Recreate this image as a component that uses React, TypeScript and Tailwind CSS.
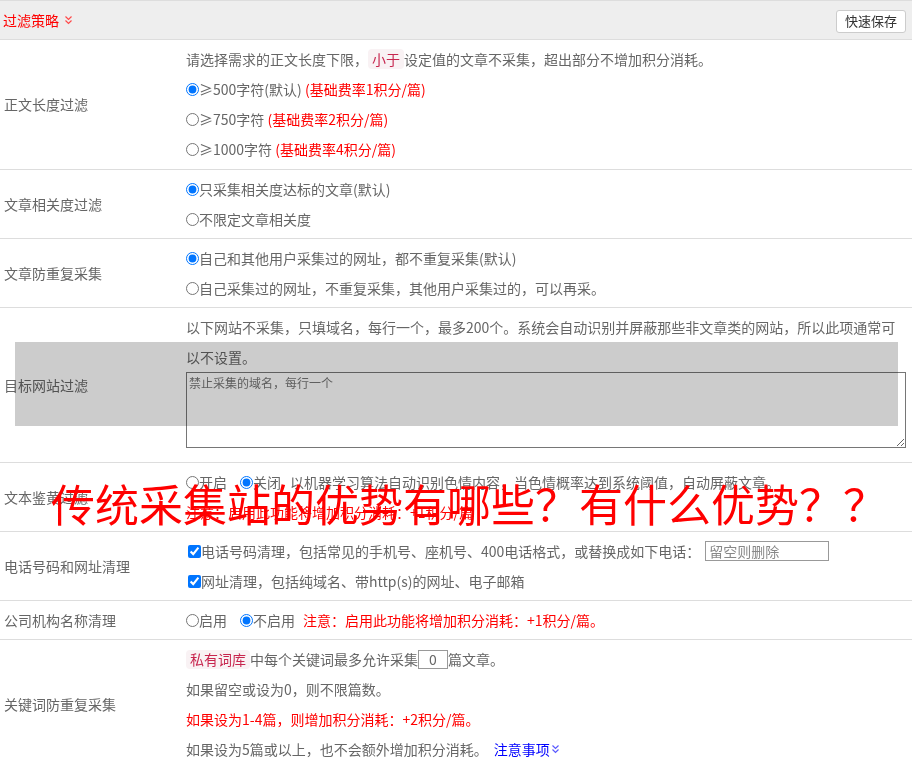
import React from "react";

function Chevrons({ color }: { color: string }) {
  return (
    <svg width="9" height="10" viewBox="0 0 9 10" className="inline-block" fill="none" stroke={color} strokeWidth="1.2">
      <path d="M1.5 1.5 L4.5 4.5 L7.5 1.5" />
      <path d="M1.5 5.5 L4.5 8.5 L7.5 5.5" />
    </svg>
  );
}

function Line({ children }: { children: React.ReactNode }) {
  return <div className="flex items-center h-[30px] whitespace-nowrap">{children}</div>;
}

function Radio({ name, checked, children, className = "" }: { name: string; checked?: boolean; children: React.ReactNode; className?: string }) {
  return (
    <label className={"flex items-center " + className}>
      <input type="radio" name={name} defaultChecked={checked} className="m-0 w-[13px] h-[13px]" />
      <span className="whitespace-pre">{children}</span>
    </label>
  );
}

function Row({ label, children, contentClass = "" }: { label: string; children: React.ReactNode; contentClass?: string }) {
  return (
    <div className="flex border-b border-[#ddd]">
      <div className="w-[186px] shrink-0 pl-[4px] flex items-center">{label}</div>
      <div className={"flex-1 pr-[6px] leading-[30px] " + contentClass}>{children}</div>
    </div>
  );
}

const Red = ({ children }: { children: React.ReactNode }) => <span className="text-[#ff0000]">{children}</span>;

export default function App() {
  return (
    <div className="relative w-[912px] min-h-[768px] bg-white text-[14px] text-[#666] font-['Noto_Sans_CJK_SC','Microsoft_YaHei',sans-serif] overflow-hidden">
      {/* header */}
      <div className="h-[40px] border-y border-[#ddd] bg-[#eeeeee] flex items-center justify-between pl-[3px] pr-[6px]">
        <div className="flex items-center gap-[5px] text-[#ff0000]">
          <span>过滤策略</span>
          <Chevrons color="#ff4a4a" />
        </div>
        <button className="h-[23px] mt-[2px] px-[8px] bg-white border border-[#ccc] rounded-[3px] text-[13px] text-[#333] leading-[20px]">快速保存</button>
      </div>

      <Row label="正文长度过滤" contentClass="pt-[4px] pb-[5px]">
        <Line>
          <span>请选择需求的正文长度下限，</span>
          <span className="inline-block px-[4px] leading-[20px] rounded-[4px] bg-[#f9f2f4] text-[#c7254e]">小于</span>
          <span>设定值的文章不采集，超出部分不增加积分消耗。</span>
        </Line>
        <Line><Radio name="len" checked>≥500字符(默认) <Red>(基础费率1积分/篇)</Red></Radio></Line>
        <Line><Radio name="len">≥750字符 <Red>(基础费率2积分/篇)</Red></Radio></Line>
        <Line><Radio name="len">≥1000字符 <Red>(基础费率4积分/篇)</Red></Radio></Line>
      </Row>

      <Row label="文章相关度过滤" contentClass="py-[4px]">
        <Line><Radio name="rel" checked>只采集相关度达标的文章(默认)</Radio></Line>
        <Line><Radio name="rel">不限定文章相关度</Radio></Line>
      </Row>

      <Row label="文章防重复采集" contentClass="py-[4px]">
        <Line><Radio name="dup" checked>自己和其他用户采集过的网址，都不重复采集(默认)</Radio></Line>
        <Line><Radio name="dup">自己采集过的网址，不重复采集，其他用户采集过的，可以再采。</Radio></Line>
      </Row>

      <Row label="目标网站过滤" contentClass="py-[4px]">
        <div className="leading-[30px] h-[60px]">以下网站不采集，只填域名，每行一个，最多200个。系统会自动识别并屏蔽那些非文章类的网站，所以此项通常可以不设置。</div>
        <textarea
          placeholder="禁止采集的域名，每行一个"
          className="block w-full h-[76px] mb-[10px] border border-[#767676] text-[12px] leading-[18px] px-[2px] py-[1px] placeholder:text-[#757575] bg-white"
        />
      </Row>

      <Row label="文本鉴黄过滤" contentClass="py-[4px]">
        <Line>
          <Radio name="porn" className="mr-[13px]">开启</Radio>
          <Radio name="porn" checked>关闭</Radio>
          <span className="ml-[9px]">以机器学习算法自动识别色情内容，当色情概率达到系统阈值，自动屏蔽文章。</span>
        </Line>
        <Line><Red>注意：启用此功能将增加积分消耗：+1积分/篇</Red></Line>
      </Row>

      <Row label="电话号码和网址清理" contentClass="py-[4px]">
        <Line>
          <input type="checkbox" defaultChecked className="m-0 ml-[2px] w-[13px] h-[13px]" />
          <span>电话号码清理，包括常见的手机号、座机号、400电话格式，或替换成如下电话：</span>
          <input
            type="text"
            placeholder="留空则删除"
            className="ml-[5px] w-[124px] h-[20px] border border-[#999] px-[3px] text-[14px] leading-[18px] placeholder:text-[#888]"
          />
        </Line>
        <Line>
          <input type="checkbox" defaultChecked className="m-0 ml-[2px] w-[13px] h-[13px]" />
          <span>网址清理，包括纯域名、带http(s)的网址、电子邮箱</span>
        </Line>
      </Row>

      <Row label="公司机构名称清理" contentClass="py-[4px]">
        <Line>
          <Radio name="org" className="mr-[13px]">启用</Radio>
          <Radio name="org" checked>不启用</Radio>
          <span className="ml-[8px] text-[#ff0000]">注意：启用此功能将增加积分消耗：+1积分/篇。</span>
        </Line>
      </Row>

      <Row label="关键词防重复采集" contentClass="py-[4px]">
        <Line>
          <span className="inline-block px-[4px] leading-[19px] rounded-[4px] bg-[#f9f2f4] text-[#c7254e]">私有词库</span>
          <span>中每个关键词最多允许采集</span>
          <input
            type="text"
            defaultValue="0"
            className="w-[30px] h-[19px] border border-[#999] text-center text-[14px] leading-[17px] text-[#666]"
          />
          <span>篇文章。</span>
        </Line>
        <Line>如果留空或设为0，则不限篇数。</Line>
        <Line><Red>如果设为1-4篇，则增加积分消耗：+2积分/篇。</Red></Line>
        <Line>
          <span>如果设为5篇或以上，也不会额外增加积分消耗。</span>
          <span className="ml-[6px] text-[#0000ff] flex items-center gap-[1px]">
            注意事项
            <Chevrons color="#5a5aff" />
          </span>
        </Line>
      </Row>

      {/* overlays */}
      <div className="absolute left-[15px] top-[342px] w-[883px] h-[84px] bg-[#cccccc] mix-blend-multiply pointer-events-none" />
      <div className="absolute left-[51px] top-[481px] text-[44px] leading-[44px] text-[#ff0000] whitespace-nowrap pointer-events-none">
        传统采集站的优势有哪些？有什么优势？？
      </div>
    </div>
  );
}
